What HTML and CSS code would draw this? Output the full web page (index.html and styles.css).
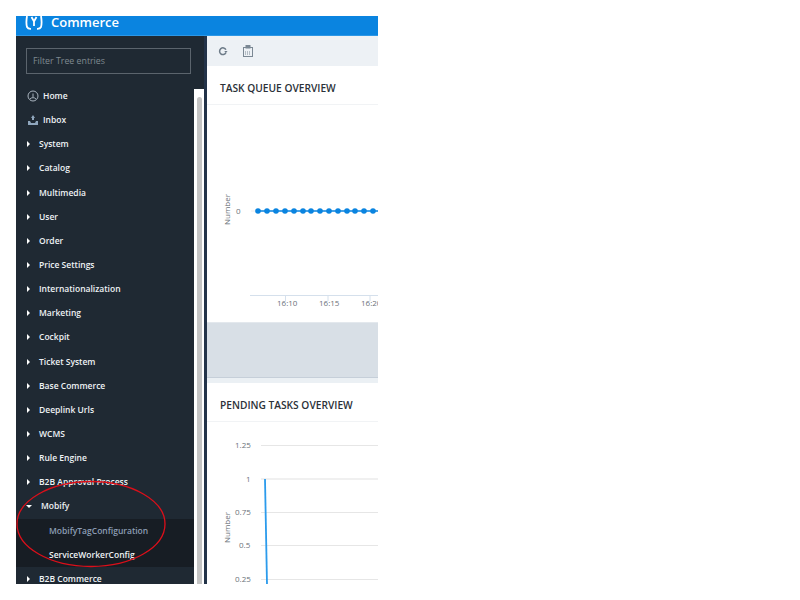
FILE: index.html
```html
<!DOCTYPE html>
<html>
<head>
    <link rel="stylesheet" href="styles.css">
</head>
<body>

<div class="app">
    <header class="topbar">
        <svg class="logo" width="18" height="14" viewBox="0 0 18 14" fill="none" stroke="#fff" stroke-width="1.800">
            <path d="M2 0 Q0.800 7 2 11 Q3 13 6 12.800"/>
            <path d="M16 0 Q17.200 7 16 11 Q15 13 12 12.800"/>
            <path d="M6.500 1 L9 5.500 L11.500 1 M9 5.500 V10"/>
        </svg>
        <span class="brand">Commerce</span>
    </header>

    <div class="main">
        <nav class="sidebar">
            <div class="filter">Filter Tree entries</div>
            <div class="sidebar-body">
                <ul class="tree">
                    <li class="top-item">
                        <svg width="12" height="12" viewBox="0 0 12 12" fill="none" stroke="#a9b4bf" stroke-width="1"><circle cx="6" cy="6" r="5"/><path d="M6 7 L6 3.500 M3 9 A4 4 0 0 1 9 9"/></svg>
                        Home
                    </li>
                    <li class="top-item">
                        <svg width="12" height="12" viewBox="0 0 12 12"><path d="M1 7 H3 L4 9 H8 L9 7 H11 V11 H1 Z M6 1 L8 4 H7 V6 H5 V4 H4 Z" fill="#8fa6bd"/></svg>
                        Inbox
                    </li>
                    <li class="item">System</li>
                    <li class="item">Catalog</li>
                    <li class="item">Multimedia</li>
                    <li class="item">User</li>
                    <li class="item">Order</li>
                    <li class="item">Price Settings</li>
                    <li class="item">Internationalization</li>
                    <li class="item">Marketing</li>
                    <li class="item">Cockpit</li>
                    <li class="item">Ticket System</li>
                    <li class="item">Base Commerce</li>
                    <li class="item">Deeplink Urls</li>
                    <li class="item">WCMS</li>
                    <li class="item">Rule Engine</li>
                    <li class="item">B2B Approval Process</li>
                    <li class="item open">Mobify</li>
                    <li class="sub muted">MobifyTagConfiguration</li>
                    <li class="sub">ServiceWorkerConfig</li>
                    <li class="item">B2B Commerce</li>
                </ul>
                <div class="scrollbar"><div class="thumb"></div></div>
            </div>
        </nav>
        <div class="divider"></div>

        <section class="content">
            <div class="toolbar">
                <svg width="10" height="10" viewBox="0 0 12 12" fill="none" stroke="#6d7b88" stroke-width="1.800"><path d="M9.500 8 A4 4 0 1 1 9.500 4.500"/><path d="M7.500 6 H11.500 L9.500 8.500 Z" fill="#6d7b88" stroke="none"/></svg>
                <svg width="10" height="12" viewBox="0 0 10 12" fill="none" stroke="#7b8894" stroke-width="1"><rect x="0.500" y="2.500" width="9" height="9"/><rect x="3" y="0.500" width="4" height="2.500" fill="#7b8894"/><path d="M2 7 H8 M2 9 H8" stroke-dasharray="1 1"/></svg>
            </div>

            <div class="card">
                <h2 class="card-title">TASK QUEUE OVERVIEW</h2>
                <svg class="chart" width="171" height="217" viewBox="0 0 171 217">
                    <text class="axis-name" transform="translate(23 120) rotate(-90)">Number</text>
                    <text class="tick" x="29" y="109">0</text>
                    <path d="M44 106 H171" stroke="#ececec"/>
                    <path d="M50 106 H171" stroke="#0a84e0" stroke-width="1.500"/>
                    <g fill="#0a84e0">
                        <circle cx="51" cy="106" r="2.800"/><circle cx="60" cy="106" r="2.800"/>
                        <circle cx="69" cy="106" r="2.800"/><circle cx="78" cy="106" r="2.800"/>
                        <circle cx="87" cy="106" r="2.800"/><circle cx="96" cy="106" r="2.800"/>
                        <circle cx="104" cy="106" r="2.800"/><circle cx="113" cy="106" r="2.800"/>
                        <circle cx="122" cy="106" r="2.800"/><circle cx="131" cy="106" r="2.800"/>
                        <circle cx="140" cy="106" r="2.800"/><circle cx="148" cy="106" r="2.800"/>
                        <circle cx="157" cy="106" r="2.800"/><circle cx="166" cy="106" r="2.800"/>
                    </g>
                    <path d="M43 190.500 H171" stroke="#d5e0ec"/>
                    <path d="M78.500 191 V196 M121 191 V196 M163 191 V196" stroke="#d5e0ec"/>
                    <text class="tick" x="70" y="201">16:10</text>
                    <text class="tick" x="112" y="201">16:15</text>
                    <text class="tick" x="154" y="201">16:20</text>
                </svg>
            </div>

            <div class="gap"></div>

            <div class="card card-last">
                <h2 class="card-title">PENDING TASKS OVERVIEW</h2>
                <svg class="chart" width="171" height="162" viewBox="0 0 171 162">
                    <text class="axis-name" transform="translate(23 121) rotate(-90)">Number</text>
                    <path d="M54 23.500 H171 M54 90.500 H171 M54 123.500 H171 M54 157.500 H171" stroke="#e6e6e6"/>
                    <path d="M54 57 H171" stroke="#f0f0f0" stroke-width="2"/>
                    <text class="tick" x="28" y="26">1.25</text>
                    <text class="tick" x="39" y="60">1</text>
                    <text class="tick" x="28" y="93">0.75</text>
                    <text class="tick" x="32" y="126">0.5</text>
                    <text class="tick" x="28" y="160">0.25</text>
                    <path d="M58 57 L60 162" stroke="#2b9bec" stroke-width="1.800" fill="none"/>
                </svg>
            </div>
        </section>
    </div>

    <!-- red hand drawn circle on top of the screenshot -->
    <svg class="scribble" width="160" height="94" viewBox="0 0 160 94" fill="none">
        <ellipse cx="81" cy="46" rx="74" ry="42.500" stroke="#dc0f1a" stroke-width="1.300"/>
    </svg>
</div>

</body>
</html>
```

FILE: styles.css
```css
* {
    box-sizing: border-box;
}
body {
    margin: 0;
    padding: 16px 0 0 16px;
    background-color: #fff;
    font-family: "Open Sans", "Noto Sans", sans-serif;
}
.app {
    position: relative;
    width: 362px;
    height: 568px;
    overflow: hidden;
    display: flex;
    flex-direction: column;
}
.topbar {
    height: 20px;
    flex: none;
    display: flex;
    align-items: flex-start;
    padding-left: 9px;
    gap: 8px;
    background-color: #0a84e0;
    border-bottom: 1px solid #2c97e6;
    overflow: hidden;
}
.logo {
    flex: none;
}
.brand {
    color: #fff;
    font-size: 13px;
    font-weight: 600;
    line-height: 12px;
}
.main {
    flex: 1;
    min-height: 0;
    display: flex;
}
.sidebar {
    width: 188px;
    flex: none;
    display: flex;
    flex-direction: column;
    background-color: #1f2933;
}
.filter {
    margin: 12px 13px 0 10px;
    height: 26px;
    flex: none;
    border: 1px solid #5b646d;
    padding-left: 6px;
    line-height: 25px;
    font-size: 8.800px;
    color: #7f8991;
}
.sidebar-body {
    flex: 1;
    min-height: 0;
    display: flex;
    margin-top: 10px;
}
.tree {
    list-style: none;
    margin: 0;
    padding: 0;
    flex: 1;
    color: #eef2f5;
    font-size: 8.500px;
    font-weight: 600;
}
.tree li {
    height: 24.150px;
    line-height: 24px;
    white-space: nowrap;
}
.top-item {
    display: flex;
    align-items: center;
    gap: 4px;
    padding-left: 11px;
}
.item {
    position: relative;
    padding-left: 23px;
}
.item::before {
    content: "";
    position: absolute;
    left: 11px;
    top: 9px;
    border-left: 3px solid #fff;
    border-top: 3px solid transparent;
    border-bottom: 3px solid transparent;
}
.item.open {
    padding-left: 25px;
}
.item.open::before {
    left: 10px;
    top: 11px;
    border-top: 3px solid #fff;
    border-left: 3px solid transparent;
    border-right: 3px solid transparent;
    border-bottom: none;
}
.sub {
    padding-left: 33px;
    background-color: #171d24;
}
.sub.muted {
    color: #8d9db5;
}
.scrollbar {
    width: 10px;
    flex: none;
    background-color: #fff;
    padding: 8px 2px 0 3px;
    margin-top: 5px;
}
.thumb {
    height: 100%;
    background-color: #c4c4c4;
    border-radius: 3px 3px 0 0;
}
.divider {
    width: 3px;
    flex: none;
    background-color: #233349;
}
.content {
    flex: 1;
    min-width: 0;
    background-color: #fff;
}
.toolbar {
    height: 30px;
    display: flex;
    align-items: center;
    gap: 15px;
    padding-left: 11px;
    background-color: #edf1f5;
}
.card {
    background-color: #fff;
}
.card-title {
    margin: 0;
    height: 39px;
    padding-left: 13px;
    line-height: 44px;
    font-size: 10.200px;
    font-weight: 600;
    color: #2b3138;
    border-bottom: 1px solid #f1f3f5;
    white-space: nowrap;
}
.chart {
    display: block;
}
.axis-name {
    font-size: 8px;
    fill: #6b7279;
}
.tick {
    font-size: 8px;
    fill: #6b7279;
}
.gap {
    height: 61px;
    background-color: #d8dfe6;
    border-top: 1px solid #e3e8ed;
    border-bottom: 5px solid #ebf0f4;
    box-shadow: inset 0 -1px 0 #c6cfd9;
}
.card-last {
    overflow: hidden;
}
.scribble {
    position: absolute;
    left: -6px;
    top: 462px;
}
```
